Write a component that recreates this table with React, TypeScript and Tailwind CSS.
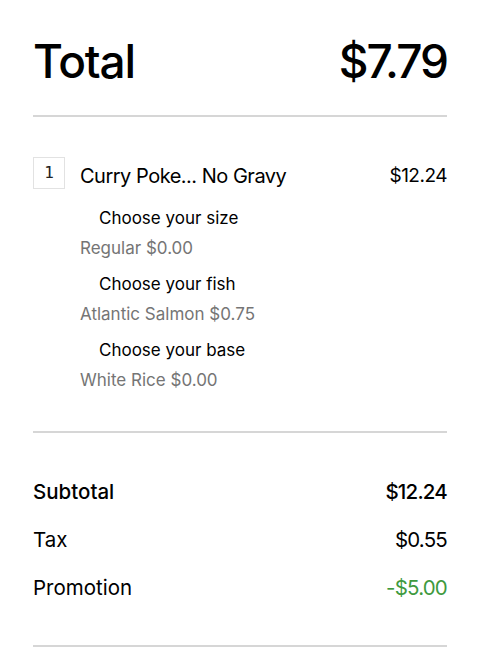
import React from "react";

const font = { fontFamily: "Inter, 'Noto Sans', sans-serif" };

export default function App() {
  const options = [
    { q: "Choose your size", a: "Regular $0.00" },
    { q: "Choose your fish", a: "Atlantic Salmon $0.75" },
    { q: "Choose your base", a: "White Rice $0.00" },
  ];
  return (
    <div className="w-[480px] h-[652px] bg-white overflow-hidden px-[33px] text-black" style={font}>
      <div className="h-[115px] flex items-center justify-between pt-[8px]">
        <span className="text-[46px] font-medium tracking-[-1.2px]">Total</span>
        <span className="text-[46px] font-medium tracking-[-2px]">$7.79</span>
      </div>
      <div className="border-b-2 border-[#d6d6d6]" />
      <div className="pt-[40px] pb-[37px]">
        <div className="flex items-center h-[32px]">
          <div
            className="w-[32px] h-[32px] border border-[#e2e2e2] flex items-center justify-center text-[16px] text-[#222]"
            style={{ fontFamily: "'DejaVu Sans Mono', monospace" }}
          >
            1
          </div>
          <span className="ml-[15px] text-[20px] tracking-[-0.5px] flex-1 pt-[5px]">Curry Poke... No Gravy</span>
          <span className="text-[19px] tracking-[-0.5px] pt-[6px]">$12.24</span>
        </div>
        <div className="mt-[13px] pl-[47px]">
          {options.map((o, i) => (
            <div key={i} className={i < options.length - 1 ? "mb-[6px]" : ""}>
              <div className="h-[30px] flex items-center pl-[19px] text-[17px] pt-[4px]">{o.q}</div>
              <div className="h-[30px] flex items-center text-[17px] text-[#757575] pt-[3px]">{o.a}</div>
            </div>
          ))}
        </div>
      </div>
      <div className="border-b-2 border-[#d6d6d6]" />
      <div className="pt-[35px] pb-[33px]">
        <div className="h-[48px] flex items-center justify-between text-[20.5px] font-medium">
          <span>Subtotal</span>
          <span className="tracking-[-0.8px]">$12.24</span>
        </div>
        <div className="h-[48px] flex items-center justify-between text-[20.5px]">
          <span>Tax</span>
          <span className="tracking-[-0.8px]">$0.55</span>
        </div>
        <div className="h-[48px] flex items-center justify-between text-[20.5px]">
          <span>Promotion</span>
          <span className="tracking-[-0.8px] text-[#3e9a3e]">-$5.00</span>
        </div>
      </div>
      <div className="border-b-2 border-[#d6d6d6]" />
    </div>
  );
}
